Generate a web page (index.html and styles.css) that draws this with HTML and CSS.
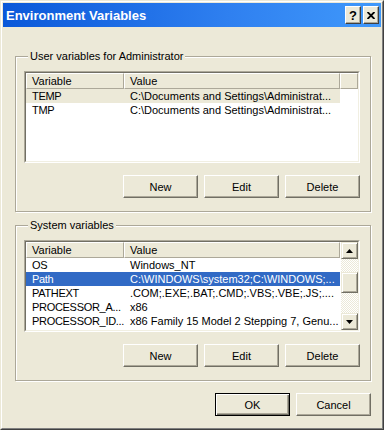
FILE: index.html
```html
<!DOCTYPE html>
<html lang="en">
<head>
    <meta charset="UTF-8">
    <meta name="viewport" content="width=device-width, initial-scale=1.0">
    <title>Environment Variables</title>
    <link rel="stylesheet" href="styles.css">
</head>
<body>
    <div class="window">
        <div class="frame">
            <div class="titlebar">
                <span class="title">Environment Variables</span>
                <div class="caption-buttons">
                    <div class="cap-btn help">?</div>
                    <div class="cap-btn close">
                        <svg width="8" height="7" viewBox="0 0 8 7">
                            <path d="M0.5 0 L7.5 7 M7.5 0 L0.5 7" stroke="#000" stroke-width="1.9"/>
                        </svg>
                    </div>
                </div>
            </div>

            <div class="content">
                <div class="group first">
                    <div class="group-title">User variables for Administrator</div>
                    <div class="list">
                        <div class="list-inner">
                            <div class="list-view">
                                <div class="list-header">
                                    <div class="hcell col-var">Variable</div>
                                    <div class="hcell col-val">Value</div>
                                    <div class="hcell col-fill"></div>
                                </div>
                                <div class="row inactive">
                                    <span class="cell col-var">TEMP</span>
                                    <span class="cell col-val">C:\Documents and Settings\Administrat...</span>
                                </div>
                                <div class="row">
                                    <span class="cell col-var">TMP</span>
                                    <span class="cell col-val">C:\Documents and Settings\Administrat...</span>
                                </div>
                            </div>
                        </div>
                    </div>
                    <div class="button-row">
                        <button class="btn">New</button>
                        <button class="btn">Edit</button>
                        <button class="btn">Delete</button>
                    </div>
                </div>

                <div class="group">
                    <div class="group-title">System variables</div>
                    <div class="list">
                        <div class="list-inner">
                            <div class="list-view">
                                <div class="list-header">
                                    <div class="hcell col-var">Variable</div>
                                    <div class="hcell col-val">Value</div>
                                </div>
                                <div class="row">
                                    <span class="cell col-var">OS</span>
                                    <span class="cell col-val">Windows_NT</span>
                                </div>
                                <div class="row selected">
                                    <span class="cell col-var">Path</span>
                                    <span class="cell col-val">C:\WINDOWS\system32;C:\WINDOWS;...</span>
                                </div>
                                <div class="row">
                                    <span class="cell col-var">PATHEXT</span>
                                    <span class="cell col-val">.COM;.EXE;.BAT;.CMD;.VBS;.VBE;.JS;....</span>
                                </div>
                                <div class="row">
                                    <span class="cell col-var">PROCESSOR_A...</span>
                                    <span class="cell col-val">x86</span>
                                </div>
                                <div class="row">
                                    <span class="cell col-var">PROCESSOR_ID...</span>
                                    <span class="cell col-val">x86 Family 15 Model 2 Stepping 7, Genu...</span>
                                </div>
                            </div>
                            <div class="scrollbar">
                                <div class="sb-btn">
                                    <svg width="7" height="4" viewBox="0 0 7 4"><polygon points="3.5,0 7,4 0,4" fill="#000"/></svg>
                                </div>
                                <div class="sb-track top"></div>
                                <div class="sb-thumb"></div>
                                <div class="sb-track rest"></div>
                                <div class="sb-btn">
                                    <svg width="7" height="4" viewBox="0 0 7 4"><polygon points="0,0 7,0 3.5,4" fill="#000"/></svg>
                                </div>
                            </div>
                        </div>
                    </div>
                    <div class="button-row">
                        <button class="btn">New</button>
                        <button class="btn">Edit</button>
                        <button class="btn">Delete</button>
                    </div>
                </div>

                <div class="dialog-buttons">
                    <button class="btn default">OK</button>
                    <button class="btn">Cancel</button>
                </div>
            </div>
        </div>
    </div>
</body>
</html>
```

FILE: styles.css
```css
* {
    box-sizing: border-box;
}

body {
    margin: 0;
    font-family: "Liberation Sans", Arial, sans-serif;
    font-size: 11px;
    color: #000;
    background-color: #ece9d8;
}

.window {
    width: 384px;
    height: 430px;
    border: 1px solid;
    border-color: #ece9d8 #404040 #404040 #ece9d8;
    background-color: #ece9d8;
}

.frame {
    height: 100%;
    border: 1px solid;
    border-color: #fff #808080 #808080 #fff;
    padding: 1px;
}

/* title bar */
.titlebar {
    height: 24px;
    display: flex;
    align-items: center;
    justify-content: space-between;
    padding: 0 2px 0 3px;
    background: linear-gradient(to right, #0a58d9, #2f80f0 60%, #4099fb);
}

.title {
    color: #fff;
    font-weight: bold;
    font-size: 13px;
}

.caption-buttons {
    display: flex;
    gap: 2px;
}

.cap-btn {
    width: 16px;
    height: 18px;
    display: flex;
    align-items: center;
    justify-content: center;
    background-color: #ece9d8;
    border: 1px solid;
    border-color: #fff #404040 #404040 #fff;
    box-shadow: inset -1px -1px 0 #aca899;
    font-weight: bold;
    font-size: 13px;
    line-height: 1;
}

/* dialog body */
.content {
    padding: 0 10px 0 12px;
}

.group {
    margin-top: 13px;
    padding: 0 10px 13px 8px;
    border: 1px solid #aca899;
    box-shadow: inset 1px 1px 0 #fff, 1px 1px 0 #fff;
}

.group.first {
    margin-top: 29px;
}

.group-title {
    width: fit-content;
    margin: -7px 0 0 4px;
    padding: 0 2px;
    line-height: 13px;
    background-color: #ece9d8;
}

.list {
    margin-top: 8px;
    height: 92px;
    border: 1px solid;
    border-color: #aca899 #fff #fff #aca899;
}

.list-inner {
    height: 100%;
    display: flex;
    border: 1px solid;
    border-color: #716f64 #f1efe2 #f1efe2 #716f64;
    background-color: #fff;
}

.list-view {
    flex: 1;
    min-width: 0;
}

.list-header {
    display: flex;
    height: 16px;
}

.hcell {
    height: 16px;
    line-height: 14px;
    padding-left: 5px;
    background-color: #ece9d8;
    border: 1px solid;
    border-color: #fff #aca899 #aca899 #fff;
}

.col-var {
    width: 98px;
    flex: none;
}

.col-val {
    width: 216px;
    flex: none;
}

.col-fill {
    flex: 1;
}

.row {
    display: flex;
    width: 314px;
    height: 14px;
    line-height: 14px;
}

.cell {
    padding-left: 6px;
    white-space: nowrap;
    overflow: hidden;
}

.cell.col-var {
    letter-spacing: -0.3px;
}

.row.inactive {
    background-color: #ece9d8;
}

.row.selected {
    background-color: #316ac5;
    color: #fff;
}

/* scroll bar */
.scrollbar {
    width: 17px;
    display: flex;
    flex-direction: column;
}

.sb-btn, .sb-thumb {
    background-color: #ece9d8;
    border: 1px solid;
    border-color: #ece9d8 #716f64 #716f64 #ece9d8;
    box-shadow: inset 1px 1px 0 #fff, inset -1px -1px 0 #aca899;
}

.sb-btn {
    height: 17px;
    display: flex;
    align-items: center;
    justify-content: center;
}

.sb-thumb {
    height: 21px;
}

.sb-track {
    background: repeating-conic-gradient(#fff 0 25%, #ece9d8 0 50%) 0 0 / 2px 2px;
}

.sb-track.top {
    height: 13px;
}

.sb-track.rest {
    flex: 1;
}

/* buttons */
.button-row, .dialog-buttons {
    display: flex;
    justify-content: flex-end;
    gap: 6px;
    margin-top: 12px;
}

.btn {
    width: 75px;
    height: 23px;
    padding: 0;
    font: inherit;
    color: #000;
    background-color: #ece9d8;
    border: 1px solid;
    border-color: #fff #716f64 #716f64 #fff;
    box-shadow: inset -1px -1px 0 #aca899;
}

.btn.default {
    border-color: #000;
    box-shadow: inset 1px 1px 0 #fff, inset -1px -1px 0 #716f64, inset -2px -2px 0 #aca899;
}
```
